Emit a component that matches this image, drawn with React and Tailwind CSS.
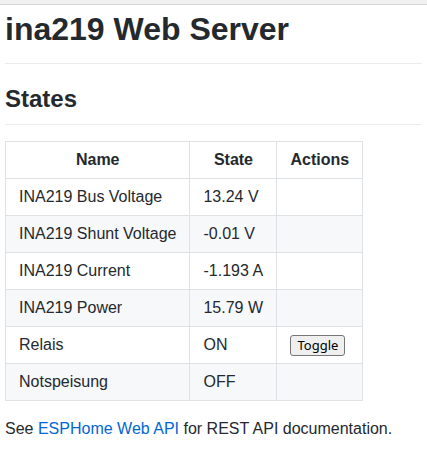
import React from "react";

const rows = [
  ["INA219 Bus Voltage", "13.24 V", null],
  ["INA219 Shunt Voltage", "-0.01 V", null],
  ["INA219 Current", "-1.193 A", null],
  ["INA219 Power", "15.79 W", null],
  ["Relais", "ON", "toggle"],
  ["Notspeisung", "OFF", null],
];

export default function App() {
  return (
    <div
      className="min-h-[456px] bg-white text-[#24292e] text-[16px] leading-[1.5]"
      style={{ fontFamily: '"Liberation Sans", Arial, sans-serif' }}
    >
      <div className="h-[5px] bg-[#f1f1f1] border-b border-[#d4d4d4]" />
      <div className="px-[5px]">
        <h1 className="text-[32px] font-bold leading-[48px] pb-[9.6px] border-b border-[#eaecef]">
          ina219 Web Server
        </h1>
        <h2 className="mt-[17.5px] text-[24px] font-bold leading-[36px] pb-[7.2px] border-b border-[#eaecef]">
          States
        </h2>
        <table className="mt-[16px] border-collapse">
          <thead>
            <tr className="bg-white">
              <th className="border border-[#dfe2e5] px-[13px] py-[6px] font-bold text-center">Name</th>
              <th className="border border-[#dfe2e5] px-[13px] py-[6px] font-bold text-center min-w-[87px]">State</th>
              <th className="border border-[#dfe2e5] px-[13px] py-[6px] font-bold text-center">Actions</th>
            </tr>
          </thead>
          <tbody>
            {rows.map((r, i) => (
              <tr key={r[0]} className={i % 2 === 1 ? "bg-[#f6f8fa]" : "bg-white"}>
                <td className="border border-[#dfe2e5] px-[13px] py-[6px]">{r[0]}</td>
                <td className="border border-[#dfe2e5] px-[13px] py-[6px]">{r[1]}</td>
                <td className="border border-[#dfe2e5] px-[13px] py-[6px]">
                  {r[2] === "toggle" ? (
                    <button
                      className="inline-block align-baseline border border-[#767676] rounded-[3px] bg-[#efefef] px-[6px] py-[1px] text-[13px] leading-[17px] text-black"
                      style={{ fontFamily: '"Noto Sans", "DejaVu Sans", sans-serif' }}
                    >
                      Toggle
                    </button>
                  ) : null}
                </td>
              </tr>
            ))}
          </tbody>
        </table>
        <p className="mt-[16px]">
          See{" "}
          <a href="#" className="text-[#0366d6]">
            ESPHome Web API
          </a>{" "}
          for REST API documentation.
        </p>
      </div>
    </div>
  );
}
